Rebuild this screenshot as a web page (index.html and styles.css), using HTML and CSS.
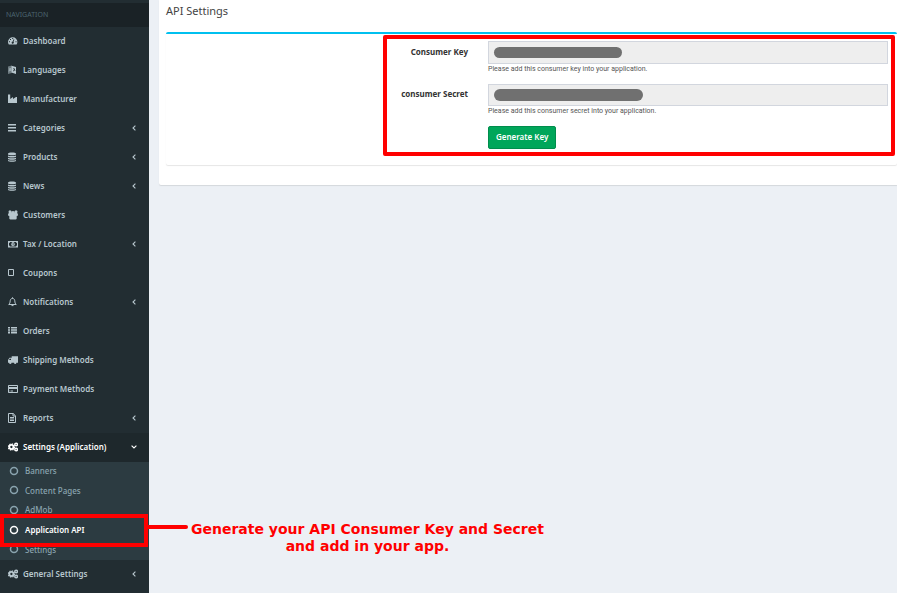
FILE: index.html
```
<!DOCTYPE html>
<html lang="en">
<head>
<meta charset="utf-8">
<title>API Settings</title>
<link rel="stylesheet" href="styles.css">
</head>
<body>
<svg class="sprite" aria-hidden="true">
  <defs>
    <symbol id="chev" viewBox="0 0 4 6"><path d="M3.400.6 1 3l2.400 2.400" fill="none" stroke="currentColor" stroke-width="1.100"/></symbol>
    <symbol id="ring" viewBox="0 0 10 10"><circle cx="5" cy="5" r="3.500" fill="none" stroke="currentColor" stroke-width="1.500"/></symbol>
    <symbol id="stack" viewBox="0 0 10 10"><path d="M0 1.500C0 0 8 0 8 1.500v1C8 3.500 0 3.500 0 2.500zM0 3.400c1.500.8 6.500.8 8 0v1.400c0 1-8 1-8 0zM0 5.700c1.500.8 6.500.8 8 0v1.400c0 1-8 1-8 0zM0 8c1.500.8 6.500.8 8 0v.8c0 1.400-8 1.400-8 0z"/></symbol>
    <symbol id="cogs" viewBox="0 0 10 10"><circle cx="3.400" cy="5" r="2.100" fill="none" stroke="currentColor" stroke-width="1.900"/><circle cx="3.400" cy="5" r="3.100" fill="none" stroke="currentColor" stroke-width="1.200" stroke-dasharray="1.300 1.130"/><circle cx="8.100" cy="2.500" r="1.300" fill="none" stroke="currentColor" stroke-width="1.500"/><circle cx="8.100" cy="7.500" r="1.300" fill="none" stroke="currentColor" stroke-width="1.500"/></symbol>
  </defs>
</svg>
<div class="layout">
  <aside class="sidebar">
    <h2 class="nav-title">NAVIGATION</h2>
    <nav>
      <ul class="menu">
        <li><a href="#"><svg class="icon" viewBox="0 0 10 10"><path fill-rule="evenodd" d="M0 6a4.700 4.700 0 0 1 9.400 0c0 1-.3 1.800-.8 2.500H.8C.3 7.800 0 7 0 6zM4.200 2h1v1h-1zM2 3h1v1H2zM1 5.300h1v1H1zM7.500 5.300h1v1h-1zM5.600 3.300l-.9 2.200a1.100 1.100 0 1 0 .8.300l.9-2.200z"/></svg>Dashboard</a></li>
        <li><a href="#"><svg class="icon" viewBox="0 0 10 10"><path d="M0 1.500 3.700.5v7.600L0 9z" opacity=".5"/><path d="M1 6.500 2.100 3l1 3M1.500 5.300h1.300" fill="none" stroke="currentColor" stroke-width=".6"/><path fill-rule="evenodd" d="M3.400.8 8 2v7L3.400 7.500zM5 3v.6l1 .3L5.200 6l.5.400.8-1.200.6.700.3-.5-.6-.8.300-.8-.9-.3z"/></svg>Languages</a></li>
        <li><a href="#"><svg class="icon" viewBox="0 0 10 10"><path d="M0 .5h2.200V5L5 3v2l3-2h1v6H0z"/></svg>Manufacturer</a></li>
        <li><a href="#"><svg class="icon" viewBox="0 0 10 10"><path d="M0 1h8v1.500H0zM0 4h8v1.500H0zM0 7h8v1.500H0z"/></svg>Categories<svg class="chev"><use href="#chev"/></svg></a></li>
        <li><a href="#"><svg class="icon"><use href="#stack"/></svg>Products<svg class="chev"><use href="#chev"/></svg></a></li>
        <li><a href="#"><svg class="icon"><use href="#stack"/></svg>News<svg class="chev"><use href="#chev"/></svg></a></li>
        <li><a href="#"><svg class="icon" viewBox="0 0 10 10"><circle cx="2" cy="1.700" r="1.500"/><circle cx="8" cy="1.700" r="1.500"/><circle cx="5" cy="3.200" r="2.100"/><path d="M0 5.500c0-1.500.4-2.400 1-2.400h8c.6 0 1 .9 1 2.400L8.700 6v2.500c0 .5-.4.900-1 .9H2.300c-.6 0-1-.4-1-.9V6z"/></svg>Customers</a></li>
        <li><a href="#"><svg class="icon" viewBox="0 0 10 10"><path fill-rule="evenodd" d="M0 2h10v6.500H0zm1 1.900v2.700c.6 0 1 .3 1 .9h6c0-.6.4-.9 1-.9V3.900c-.6 0-1-.3-1-.9H2c0 .6-.4.900-1 .9z"/><ellipse cx="5" cy="5.200" rx="1.700" ry="2.100"/><path d="M4.800 4h.6v2.400h-.6z" fill="#222d32"/></svg>Tax / Location<svg class="chev"><use href="#chev"/></svg></a></li>
        <li><a href="#"><svg class="icon" viewBox="0 0 10 10"><path d="M.5 1.500h5v6h-5z" fill="none" stroke="currentColor"/></svg>Coupons</a></li>
        <li><a href="#"><svg class="icon" viewBox="0 0 10 10"><path d="M.7 7.500C2 6.600 2 5.500 2.200 3.800 2.400 2 3.300 1.500 4.500 1.500S6.600 2 6.800 3.800C7 5.500 7 6.600 8.300 7.500zM4.500.3v1.200M3.500 8.600h2" fill="none" stroke="currentColor"/></svg>Notifications<svg class="chev"><use href="#chev"/></svg></a></li>
        <li><a href="#"><svg class="icon" viewBox="0 0 10 10"><path d="M0 1h2v1.500H0zM3 1h6v1.500H3zM0 3.200h2v1.500H0zM3 3.200h6v1.500H3zM0 5.400h2v1.500H0zM3 5.400h6v1.500H3zM0 7.500h2V8H0zM3 7.500h6V8H3z"/></svg>Orders</a></li>
        <li><a href="#"><svg class="icon" viewBox="0 0 10 10"><path fill-rule="evenodd" d="M3.700 1.200H10v6.500H0V5l1.500-2.200h2.200zM1 5h2V3.700H1.800z"/><circle cx="2.300" cy="7.700" r="1.200"/><circle cx="7.200" cy="7.700" r="1.200"/></svg>Shipping Methods</a></li>
        <li><a href="#"><svg class="icon" viewBox="0 0 10 10"><path fill-rule="evenodd" d="M.8 1h8.400q.8 0 .8.800v6.400q0 .8-.8.800H.8Q0 9 0 8.200V1.800Q0 1 .8 1zM1 2v1h8V2zm0 3v3h8V5z"/><path d="M1.500 6.500h1v1h-1zM3 6.500h2v1H3z"/></svg>Payment Methods</a></li>
        <li><a href="#"><svg class="icon" viewBox="0 0 10 10"><path d="M.5.5h4.700l2.300 2.300v6.700h-7zM5 .5V3h2.500M2 4.500h4M2 6h4M2 7.500h4" fill="none" stroke="currentColor"/></svg>Reports<svg class="chev"><use href="#chev"/></svg></a></li>
        <li class="open">
          <a href="#"><svg class="icon"><use href="#cogs"/></svg>Settings (Application)<svg class="chev down"><use href="#chev"/></svg></a>
          <ul class="submenu">
            <li><a href="#"><svg class="icon"><use href="#ring"/></svg>Banners</a></li>
            <li><a href="#"><svg class="icon"><use href="#ring"/></svg>Content Pages</a></li>
            <li><a href="#"><svg class="icon"><use href="#ring"/></svg>AdMob</a></li>
            <li class="current"><a href="#"><svg class="icon"><use href="#ring"/></svg>Application API</a>
              <div class="marker"></div>
              <div class="callout"><span class="pointer"></span><p>Generate your API Consumer Key and Secret<br>and add in your app.</p></div>
            </li>
            <li><a href="#"><svg class="icon"><use href="#ring"/></svg>Settings</a></li>
          </ul>
        </li>
        <li><a href="#"><svg class="icon"><use href="#cogs"/></svg>General Settings<svg class="chev"><use href="#chev"/></svg></a></li>
      </ul>
    </nav>
  </aside>
  <main class="content">
    <section class="panel">
      <h1>API Settings</h1>
      <form class="box">
        <div class="row">
          <label for="key">Consumer Key</label>
          <div class="field">
            <input id="key" type="text" readonly><span class="mask"></span>
            <p class="help">Please add this consumer key into your application.</p>
          </div>
        </div>
        <div class="row">
          <label for="secret">consumer Secret</label>
          <div class="field">
            <input id="secret" type="text" readonly><span class="mask long"></span>
            <p class="help">Please add this consumer secret into your application.</p>
          </div>
        </div>
        <div class="row actions"><button type="button">Generate Key</button></div>
        <div class="outline"></div>
      </form>
    </section>
  </main>
</div>
</body>
</html>
```
FILE: styles.css
```
* { box-sizing: border-box; }
body {
  margin: 0;
  background: #ecf0f5;
  color: #333;
  font-family: "Noto Sans", "Open Sans", sans-serif;
  font-size: 8px;
}
ul, p, h1, h2 { margin: 0; padding: 0; }
ul { list-style: none; }
a { color: inherit; text-decoration: none; }
.sprite { position: absolute; width: 0; height: 0; }
.layout { display: flex; min-height: 100vh; }

.sidebar {
  flex: 0 0 149px;
  padding-top: 3px;
  background: #222d32;
  color: #b8c7ce;
  font-weight: 600;
}
.nav-title {
  padding-left: 6px;
  background: #1a2226;
  color: #4b646f;
  font-size: 7px;
  font-weight: 400;
  line-height: 24px;
}
.menu a {
  display: flex;
  align-items: center;
  height: 29px;
  padding: 0 13px 2px 8px;
}
.icon {
  flex: none;
  width: 10px;
  height: 10px;
  margin-right: 5px;
  fill: currentColor;
}
.chev { width: 4px; height: 6px; margin-left: auto; }
.chev.down { transform: rotate(-90deg); }
.open > a { background: #1e282c; color: #fff; }
.submenu {
  display: grid;
  grid-auto-rows: 1fr;
  min-height: 98px;
  background: #2c3b41;
  color: #8aa4af;
  font-weight: 500;
}
.submenu li { position: relative; display: grid; }
.submenu a { height: auto; padding-left: 9px; }
.submenu .icon { margin-right: 6px; }
.current { color: #fff; font-weight: 600; }
.marker {
  position: absolute;
  inset: -7px 1px;
  left: 0;
  z-index: 1;
  border: 4px solid #f00;
}
.callout {
  position: absolute;
  top: 0;
  left: 100%;
  z-index: 1;
  display: flex;
  color: #f00;
  font: bold 14px/17px "DejaVu Sans", sans-serif;
  text-align: center;
  white-space: nowrap;
}
.pointer {
  width: 40px;
  height: 4px;
  margin: 4px 3px 0 -1px;
  border-radius: 0 2px 2px 0;
  background: #f00;
}

.content { flex: 1; min-width: 0; padding-left: 10px; overflow: hidden; }
.panel {
  padding: 0 0 20px 7px;
  border-radius: 0 0 0 2px;
  background: #fff;
  box-shadow: 0 1px 1px rgba(0, 0, 0, .1);
}
h1 {
  height: 32px;
  color: #444;
  font-size: 11px;
  font-weight: 400;
  line-height: 22px;
}
.box {
  position: relative;
  padding: 7px 9px 16px 0;
  border-top: 2px solid #00c0ef;
  border-radius: 2px;
  box-shadow: 0 1px 1px rgba(0, 0, 0, .1);
}
.row {
  display: grid;
  grid-template-columns: 302px 1fr;
  column-gap: 20px;
  min-height: 43px;
}
.row + .row { min-height: 42px; }
.row label { font-weight: 700; line-height: 22px; text-align: right; }
.row + .row label { line-height: 20px; }
.field { position: relative; }
.field input {
  display: block;
  width: 100%;
  height: 23px;
  padding: 0 6px;
  border: 1px solid #d2d6de;
  border-radius: 0;
  background: #eee;
}
.row + .row input { height: 22px; }
.mask {
  position: absolute;
  top: 6px;
  left: 6px;
  width: 128px;
  height: 11px;
  border-radius: 6px;
  background: #707070;
}
.mask.long { top: 5px; width: 149px; height: 12px; }
.help {
  color: #555;
  font-family: Roboto, sans-serif;
  font-size: 7px;
  line-height: 10px;
}
.row.actions { min-height: 23px; }
button {
  grid-column: 2;
  justify-self: start;
  height: 23px;
  padding: 0 7px 2px;
  border: 1px solid #008d4c;
  border-radius: 2px;
  background: #00a65a;
  color: #fff;
  font: 600 8px "Noto Sans", "Open Sans", sans-serif;
}
.outline {
  position: absolute;
  top: 1px;
  right: 2px;
  bottom: 9px;
  left: 217px;
  border: 4px solid #f00;
  border-radius: 2px;
  pointer-events: none;
}
```
